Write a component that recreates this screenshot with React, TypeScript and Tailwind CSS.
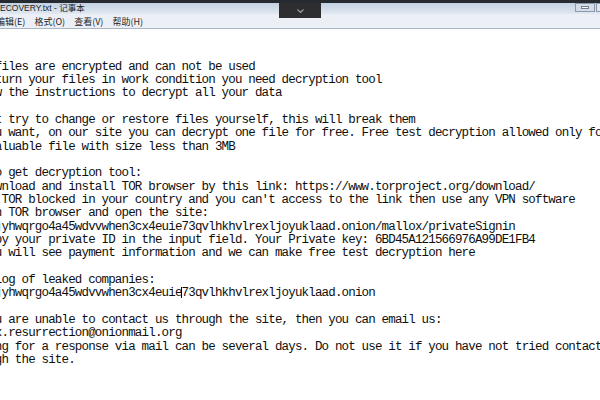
const lines: string[] = [
  "",
  "",
  "Your files are encrypted and can not be used",
  "To return your files in work condition you need decryption tool",
  "Follow the instructions to decrypt all your data",
  "",
  "Do not try to change or restore files yourself, this will break them",
  "If you want, on our site you can decrypt one file for free. Free test decryption allowed only for",
  "not valuable file with size less than 3MB",
  "",
  "How to get decryption tool:",
  "1) Download and install TOR browser by this link: https://www.torproject.org/download/",
  "2) If TOR blocked in your country and you can't access to the link then use any VPN software",
  "3) Run TOR browser and open the site:",
  "wtyafjyhwqrgo4a45wdvvwhen3cx4euie73qvlhkhvlrexljoyuklaad.onion/mallox/privateSignin",
  "4) Copy your private ID in the input field. Your Private key: 6BD45A121566976A99DE1FB4",
  "5) You will see payment information and we can make free test decryption here",
  "",
  "Our blog of leaked companies:",
  "CURSOR",
  "",
  "If you are unable to contact us through the site, then you can email us:",
  "mallox.resurrection@onionmail.org",
  "Waiting for a response via mail can be several days. Do not use it if you have not tried contacting",
  "through the site.",
];

const menu = ["编辑(E)", "格式(O)", "查看(V)", "帮助(H)"];

function NoteLine({ text }: { text: string }) {
  if (text === "CURSOR") {
    // caret sits between "euie" and "73"
    return (
      <div className="h-[13.333px]">
        wtyafjyhwqrgo4a45wdvvwhen3cx4euie
        <span className="relative">
          <span className="absolute left-[-0.5px] top-[1px] h-[11px] w-px bg-black" />
        </span>
        73qvlhkhvlrexljoyuklaad.onion
      </div>
    );
  }
  return <div className="h-[13.333px]">{text}</div>;
}

export default function App() {
  return (
    <div className="relative flex h-[400px] w-[600px] flex-col overflow-hidden bg-white">
      <div className="h-[3px] bg-[#262a31]" />

      {/* title bar */}
      <div className="flex h-[11px] items-center justify-between bg-gradient-to-b from-[#c2d1e2] to-[#e1e8f1] font-['Liberation_Sans','Noto_Sans_CJK_SC',sans-serif] text-[8.5px] text-[#1e1e1e]">
        <span className="leading-none">ECOVERY.txt - 记事本</span>
        <div className="flex h-full items-start gap-px">
          <div className="flex h-[9px] w-[20px] items-center justify-center border border-[#8c99aa] bg-[#d3dce8]">
            <div className="h-[3px] w-[8px] border border-[#74808f] bg-[#f5f7fa]" />
          </div>
          <div className="h-[9px] w-[4px] border border-r-0 border-[#8c99aa] bg-[#dfe6ef]" />
        </div>
      </div>

      {/* menu bar */}
      <div className="flex h-[14px] items-center gap-[9px] bg-[#eceff6] font-['Noto_Sans_CJK_SC',sans-serif] text-[9px] leading-none text-[#1e1e1e]">
        {menu.map((m, i) => (
          <span key={m} className={i === 0 ? "-ml-[4px]" : ""}>
            {m}
          </span>
        ))}
      </div>
      <div className="h-px bg-[#a9b6c6]" />

      {/* edit area */}
      <div className="flex-1 overflow-hidden pt-[5px]">
        <div className="-ml-[38.5px] whitespace-pre font-['Liberation_Mono',monospace] text-[12.5px] leading-[13.333px] tracking-[-0.833px] text-[#0f0f0f]">
          {lines.map((l, i) => (
            <NoteLine key={i} text={l} />
          ))}
        </div>
      </div>

      {/* capture toolbar overlay */}
      <div className="absolute left-[279px] top-[3px] flex h-[15px] w-[42px] items-start justify-center bg-[#2e2e30] pt-[6px]">
        <svg width="7" height="4" viewBox="0 0 7 4" fill="none">
          <polyline points="0.5,0.5 3.5,3.5 6.5,0.5" stroke="#9c9c9c" strokeWidth="1.2" />
        </svg>
      </div>
    </div>
  );
}
